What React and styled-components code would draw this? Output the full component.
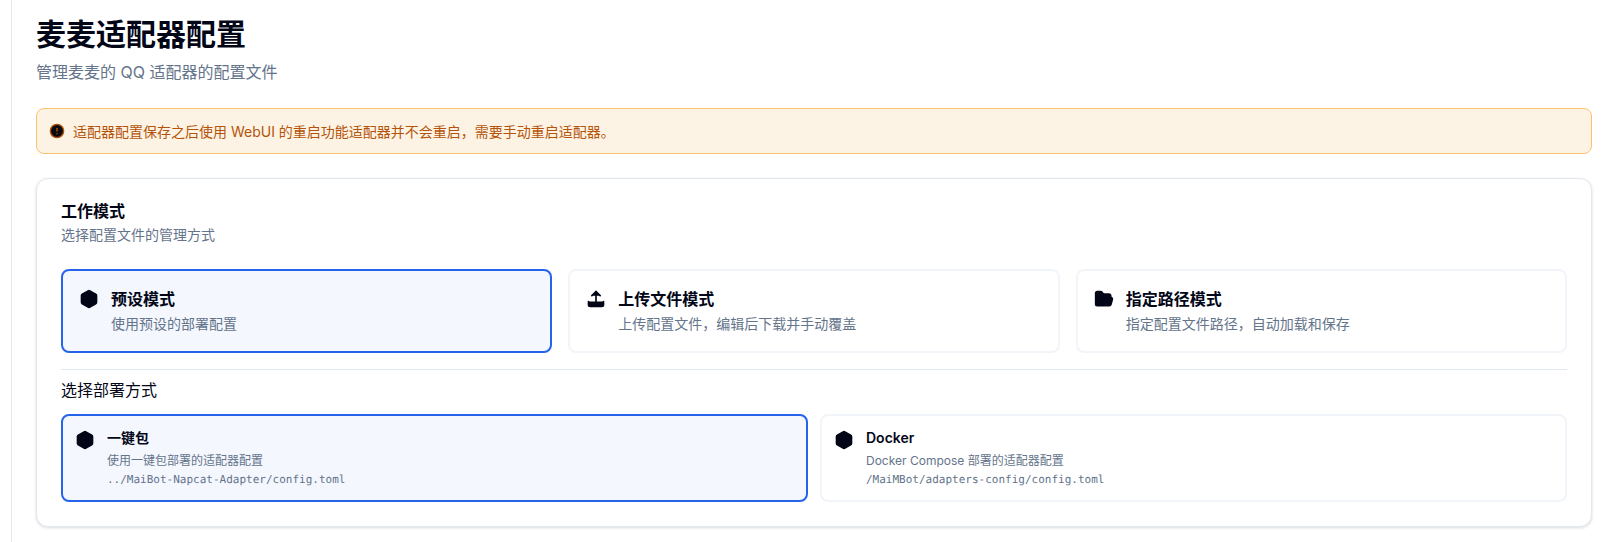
import React from "react";
import styled, { createGlobalStyle } from "styled-components";
import { Box, CircleAlert, FolderOpen, Upload } from "lucide-react";

const modes = [
  { id: "preset", icon: Box, title: "预设模式", desc: "使用预设的部署配置", active: true },
  { id: "upload", icon: Upload, title: "上传文件模式", desc: "上传配置文件\uFF0C编辑后下载并手动覆盖" },
  { id: "path", icon: FolderOpen, title: "指定路径模式", desc: "指定配置文件路径\uFF0C自动加载和保存" },
];

const deployments = [
  {
    id: "oneclick",
    title: "一键包",
    desc: "使用一键包部署的适配器配置",
    path: "../MaiBot-Napcat-Adapter/config.toml",
    active: true,
  },
  {
    id: "docker",
    title: "Docker",
    desc: "Docker Compose 部署的适配器配置",
    path: "/MaiMBot/adapters-config/config.toml",
  },
];

const alertText = "适配器配置保存之后使用 WebUI 的重启功能适配器并不会重启\uFF0C需要手动重启适配器。";

function App() {
  return (
    <>
      <GlobalStyle />
      <Layout>
        <SideEdge />
        <Main>
          <PageTitle>麦麦适配器配置</PageTitle>
          <PageSubtitle>管理麦麦的 QQ 适配器的配置文件</PageSubtitle>

          <Alert>
            <CircleAlert size={16} />
            <span>{alertText}</span>
          </Alert>

          <Panel>
            <PanelTitle>工作模式</PanelTitle>
            <PanelDesc>选择配置文件的管理方式</PanelDesc>

            <ModeGrid>
              {modes.map((mode) => (
                <ModeCard key={mode.id} $active={mode.active}>
                  <IconSlot>
                    <mode.icon size={20} />
                  </IconSlot>
                  <div>
                    <ModeTitle>{mode.title}</ModeTitle>
                    <ModeDesc>{mode.desc}</ModeDesc>
                  </div>
                </ModeCard>
              ))}
            </ModeGrid>

            <Divider />
            <SectionLabel>选择部署方式</SectionLabel>

            <DeployGrid>
              {deployments.map((item) => (
                <DeployCard key={item.id} $active={item.active}>
                  <IconSlot>
                    <Box size={20} />
                  </IconSlot>
                  <div>
                    <DeployTitle>{item.title}</DeployTitle>
                    <DeployDesc>{item.desc}</DeployDesc>
                    <DeployPath>{item.path}</DeployPath>
                  </div>
                </DeployCard>
              ))}
            </DeployGrid>
          </Panel>
        </Main>
      </Layout>
    </>
  );
}

export default App;

// Styled Components

const GlobalStyle = createGlobalStyle`
  html, body {
    margin: 0;
    height: 100%;
    overflow: hidden;
    background: #ffffff;
  }

  body {
    font-family: Inter, "Noto Sans CJK SC", sans-serif;
    color: #020617;
  }

  * {
    box-sizing: border-box;
  }
`;

const Layout = styled.div`
  display: flex;
  height: 542px;
`;

const SideEdge = styled.div`
  flex: 0 0 12px;
  border-right: 1px solid #e2e8f0;
`;

const Main = styled.main`
  flex: 1;
  min-width: 0;
  padding: 16px 10px 0 24px;
`;

const PageTitle = styled.h1`
  margin: 0;
  font-size: 30px;
  line-height: 36px;
  font-weight: 700;
`;

const PageSubtitle = styled.p`
  margin: 8px 0 0;
  font-size: 16px;
  line-height: 24px;
  color: #64748b;
`;

const Alert = styled.div`
  display: flex;
  align-items: center;
  gap: 8px;
  height: 46px;
  margin-top: 24px;
  padding: 0 12px;
  background: #fdf3e4;
  border: 1px solid #fbc26c;
  border-radius: 8px;
  font-size: 14px;
  color: #b45309;

  svg {
    flex-shrink: 0;
    fill: #0b0b12;
  }
`;

const Panel = styled.section`
  margin-top: 24px;
  padding: 24px;
  background: #ffffff;
  border: 1px solid #e2e8f0;
  border-radius: 12px;
  box-shadow: 0 1px 3px rgba(15, 23, 42, 0.15);
`;

const PanelTitle = styled.h2`
  margin: 0;
  font-size: 16px;
  line-height: 16px;
  font-weight: 600;
`;

const PanelDesc = styled.p`
  margin: 6px 0 0;
  font-size: 14px;
  line-height: 20px;
  color: #64748b;
`;

const ModeGrid = styled.div`
  display: grid;
  grid-template-columns: repeat(3, 1fr);
  gap: 16px;
  margin-top: 24px;
`;

const ModeCard = styled.div`
  display: flex;
  align-items: flex-start;
  gap: 12px;
  padding: 16px;
  background: ${(p) => (p.$active ? "#f4f7fe" : "#ffffff")};
  border: 2px solid ${(p) => (p.$active ? "#2563eb" : "#f1f5f9")};
  border-radius: 8px;
`;

const IconSlot = styled.div`
  display: flex;
  flex-shrink: 0;
  margin-top: 2px;

  svg {
    fill: #020617;
    color: #020617;
  }
`;

const ModeTitle = styled.div`
  font-size: 16px;
  line-height: 24px;
  font-weight: 600;
`;

const ModeDesc = styled.div`
  margin: 3px 0 1px;
  font-size: 14px;
  line-height: 20px;
  color: #64748b;
`;

const Divider = styled.hr`
  margin: 16px 0 0;
  border: 0;
  border-top: 1px solid #e2e8f0;
`;

const SectionLabel = styled.div`
  margin: 8px 0 12px;
  font-size: 16px;
  line-height: 24px;
`;

const DeployGrid = styled.div`
  display: grid;
  grid-template-columns: repeat(2, 1fr);
  gap: 12px;
`;

const DeployCard = styled.div`
  display: flex;
  align-items: flex-start;
  gap: 12px;
  padding: 12px;
  background: ${(p) => (p.$active ? "#f4f7fe" : "#ffffff")};
  border: 2px solid ${(p) => (p.$active ? "#2563eb" : "#f1f5f9")};
  border-radius: 8px;
`;

const DeployTitle = styled.div`
  font-size: 14px;
  line-height: 20px;
  font-weight: 600;
`;

const DeployDesc = styled.div`
  margin-top: 5px;
  font-size: 12px;
  line-height: 16px;
  color: #64748b;
`;

const DeployPath = styled.div`
  margin-top: 3px;
  font-family: "DejaVu Sans Mono", monospace;
  font-size: 11px;
  text-rendering: geometricPrecision;
  line-height: 16px;
  color: #64748b;
`;
